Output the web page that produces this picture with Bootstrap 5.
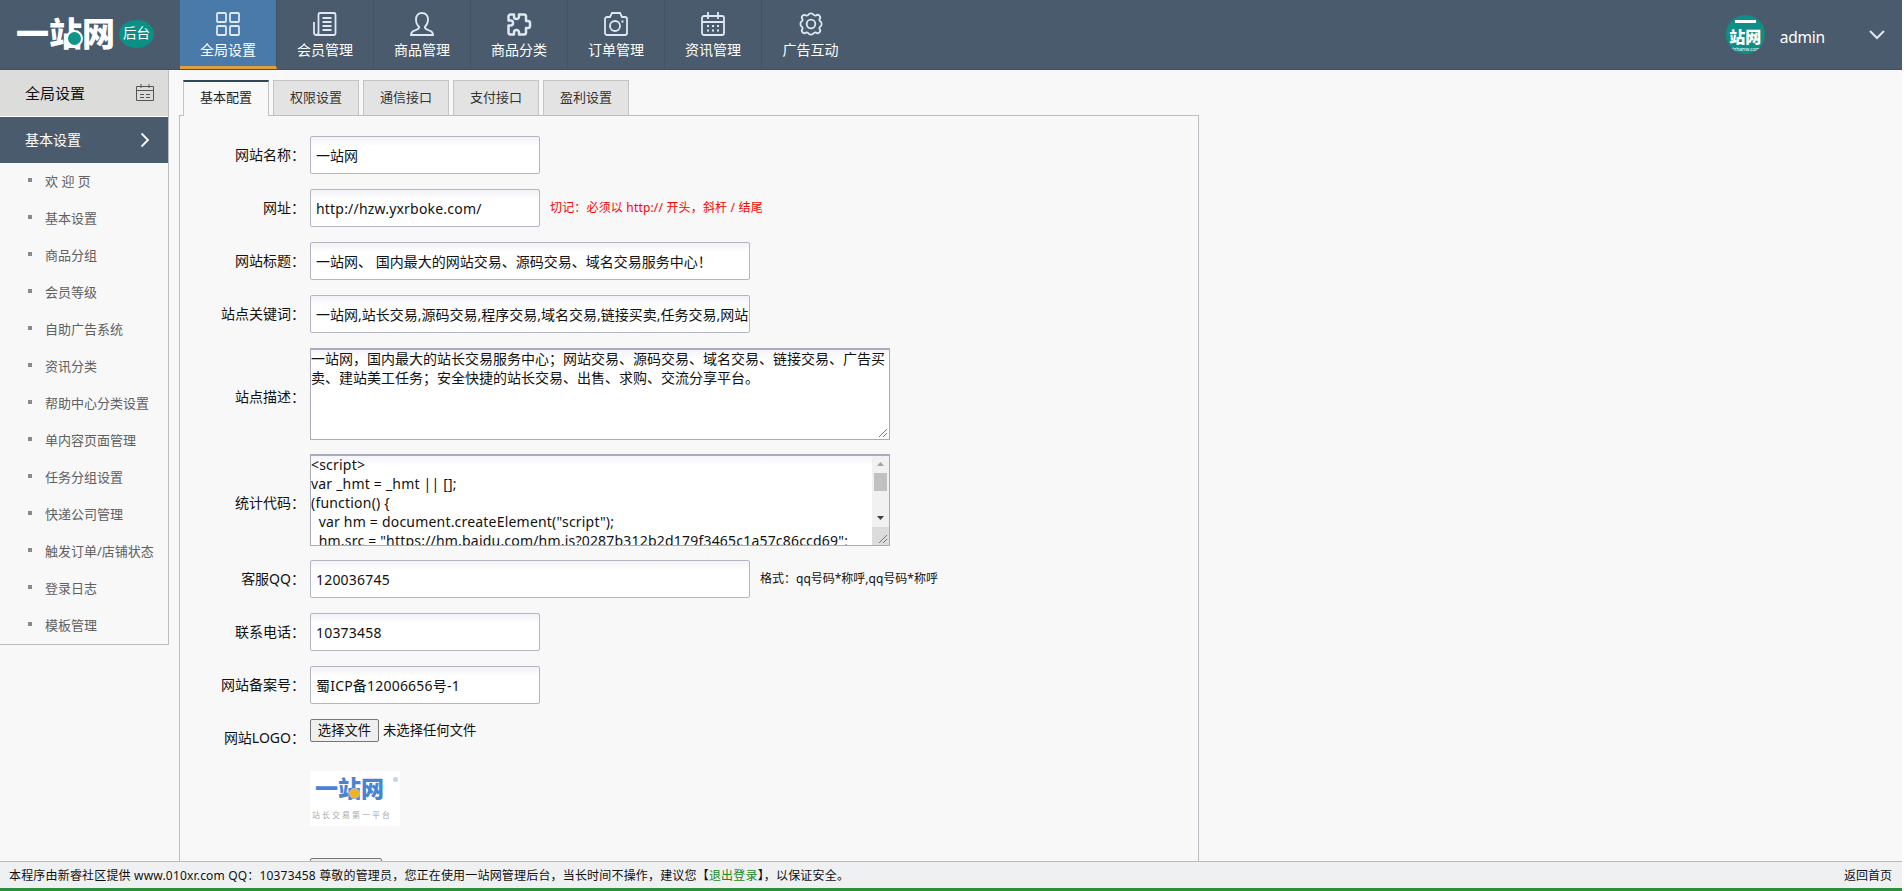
<!DOCTYPE html>
<html lang="zh-CN">
<head>
<meta charset="utf-8">
<title>一站网后台</title>
<link href="https://cdn.jsdelivr.net/npm/bootstrap@5.3.0/dist/css/bootstrap.min.css" rel="stylesheet">
<style>
body{font-family:"Noto Sans","Noto Sans CJK SC",sans-serif;font-size:14px;line-height:20px;color:#111;background:#f8f8f8;height:891px;overflow:hidden}
a{color:inherit;text-decoration:none}
svg{display:block}
.shell{height:891px;border-right:2px solid #fff}
.topbar{height:70px;background:#4a5b6d;border-bottom:1px solid #3f5062;color:#fff}
.brand{width:180px;padding-left:16px}
.heavy{font-family:"Noto Sans CJK SC",sans-serif;font-weight:900;line-height:1}
.brand .heavy{font-size:33px;width:101px;white-space:nowrap;position:relative;top:-2px}
.dot{position:absolute;left:50px;top:14px;width:17px;height:17px;border-radius:50%;background:#0e9488;border:2px solid #fff}
.pill{width:35px;height:28px;border-radius:50%;background:#0c8f84;font-size:13.500px;line-height:26px;text-align:center;margin:-1px 0 0 2px}
.topnav a{width:97px;height:69px;padding-top:11px;border-right:1px solid #435366;display:flex;flex-direction:column;align-items:center;line-height:20px}
.topnav a span{margin-top:3px}
.topnav a:last-child{border-right:0}
.topnav a.active{width:97px;background:#4a7aaa;border-bottom:3px solid #dfa03c}
.topnav svg,.ico{fill:none;stroke:#dde8f2;stroke-width:1.8}
.avatar{width:39px;height:39px;border-radius:50%;background:#0e8e86;overflow:hidden;text-align:center;margin-right:15px}
.avatar i{display:block;width:21px;height:3px;background:#fff;margin:5px auto 5px}
.avatar .heavy{font-size:16px;height:18px}
.avatar small{display:block;font-size:5px;line-height:7px}
.user-name{font-size:15.500px;letter-spacing:-.2px;margin-right:43px}
.side{width:169px;border-right:1px solid #bbbec2;height:575px;border-bottom:1px solid #bbbec2}
.side-head{height:47px;background:#dcdcda;border-bottom:1px solid #fff;font-size:15px;padding:0 14px 0 25px}
.side-cur{height:46px;background:#4a5b6d;color:#fff;padding:0 18px 0 25px}
.side-list{margin-top:-1px}
.side-list a{height:37px;padding-left:28px;font-size:13px;color:#606060;white-space:nowrap}
.side-list a::before{content:"";width:4px;height:4px;background:#8a8a8a;margin:-2px 13px 0 0}
.main{margin-left:10px;width:1020px}
.tabs{height:45px;padding:10px 0 0 4px;gap:4px}
.tabs a{width:86px;height:35px;border:1px solid #c4c4c4;border-bottom:0;background:#e3e3e3;font-size:13px;color:#333;text-align:center;line-height:33px}
.tabs a.active{background:#f8f8f8;border-top:2px solid #2f4756;height:36px;position:relative;line-height:31px;color:#222}
.panel{border:1px solid #bbbec2;height:760px;padding-top:20px;overflow:hidden}
.line{margin-bottom:15px;height:38px}
.line.tall{height:92px;margin-bottom:14px}
.lab{width:125px;text-align:right;margin-right:5px;white-space:nowrap}
.tall .lab{padding-top:5px}
.form-control.inp{width:230px;height:38px;border:1px solid #b3b5c0;border-radius:2px;padding:0 0 0 5px;font-size:14px;color:#111;background:linear-gradient(#f2f2f8,#fff 9px)}
.form-control.inp.wide{width:440px}
.form-control.inp.latin{letter-spacing:.2px}
.area{width:580px;height:92px;border:1px solid #a9abb8;border-top-width:2px;background:linear-gradient(#f4f4fb,#fff 9px);line-height:19px;white-space:pre;overflow:hidden;position:relative}
.area span{display:block;margin-top:-1px}
.area .code{letter-spacing:.2px}
.grip{position:absolute;right:1px;bottom:1px;stroke:#777;fill:none}
.scroller{position:absolute;right:0;top:0;width:17px;height:71px;background:#f1f1f1}
.thumb{width:13px;height:18px;background:#c1c1c1;margin:1px 2px 34px}
.corner{position:absolute;right:0;bottom:0;width:17px;height:18px;background:#dcdcdc}
.hint{font-size:12px;margin-left:10px;white-space:nowrap}
.filebtn{width:69px;height:23px;border:1px solid #767676;border-radius:2px;background:#efefef;font-size:13.33px;line-height:20px;text-align:center;margin-right:4px}
.logo-img{width:90px;height:55px;background:#fff;margin:14px 0 32px 130px;padding:5px 0 0 5px;position:relative;color:#4b83d3}
.logo-img .heavy{font-size:23px;white-space:nowrap}
.logo-img b{position:absolute;left:39px;top:17px;width:11px;height:11px;border-radius:50%;background:#f3b21b;border:1px solid #b8c4d8}
.logo-img em{position:absolute;right:2px;top:6px;width:5px;height:5px;border-radius:50%;background:#b9d8f2}
.logo-img p{font-size:8px;letter-spacing:2px;color:#aaa;line-height:10px;margin:11px 0 0 -3px;white-space:nowrap}
.foot{height:30px;border-top:1px solid #bbb;border-bottom:3px solid #2b9039;background:#eff0f1;font-size:12px;line-height:28px;padding:0 10px 0 9px;position:relative}
.foot a{color:#1c8a1c}
.foot .num{letter-spacing:.18px}
</style>
</head>
<body>
<div class="shell d-flex flex-column">
<header class="topbar d-flex flex-shrink-0">
  <div class="brand d-flex align-items-center"><div class="heavy">一站网<span class="dot"></span></div><div class="pill">后台</div></div>
  <nav class="topnav d-flex flex-grow-1">
    <a href="#" class="active"><svg width="26" height="26" viewBox="0 0 26 26"><rect x="2" y="2" width="9" height="9" rx="1"/><rect x="15" y="2" width="9" height="9" rx="1"/><rect x="2" y="15" width="9" height="9" rx="1"/><rect x="15" y="15" width="9" height="9" rx="1"/></svg><span>全局设置</span></a>
    <a href="#"><svg width="26" height="26" viewBox="0 0 26 26"><path d="M8 2h14a1.500 1.500 0 0 1 1.500 1.500v19A1.500 1.500 0 0 1 22 24H4.500A2.500 2.500 0 0 1 2 21.500V11M6.500 21.500v-18A1.500 1.500 0 0 1 8 2M6.500 21.500A2.300 2.300 0 0 1 4.500 24M10.500 7h9M10.500 11h9M10.500 15h9M10.500 19h9"/></svg><span>会员管理</span></a>
    <a href="#"><svg width="26" height="26" viewBox="0 0 26 26"><path d="M13 2c-4 0-6 3-6 6.500 0 3 1.500 6 3.200 7.500 0 2-1.500 2.500-4 3.300C3.500 20 2 21 2 24h22c0-3-1.500-4-4.200-4.700-2.500-.8-4-1.300-4-3.300C17.500 14.500 19 11.500 19 8.500 19 5 17 2 13 2z"/></svg><span>商品管理</span></a>
    <a href="#"><svg width="26" height="26" viewBox="0 0 26 26"><path stroke-width="2.500" stroke-linejoin="round" d="M8 3.500H4.500A2 2 0 0 0 2.500 5.500v4h2a2.300 2.300 0 0 1 0 5h-2v7a2 2 0 0 0 2 2H8v-2a2.300 2.300 0 0 1 5 0v2h5a2 2 0 0 0 2-2v-4.500h2a2 2 0 0 0 2-2v-3a2 2 0 0 0-2-2h-2V5.500a2 2 0 0 0-2-2h-5v2a2.300 2.300 0 0 1-5 0z"/></svg><span>商品分类</span></a>
    <a href="#"><svg width="26" height="26" viewBox="0 0 26 26"><path d="M4 6h3l2-4h8l2 4h3a2 2 0 0 1 2 2v14a2 2 0 0 1-2 2H4a2 2 0 0 1-2-2V8a2 2 0 0 1 2-2zM18.500 10.500h2"/><circle cx="12" cy="15" r="5"/></svg><span>订单管理</span></a>
    <a href="#"><svg width="26" height="26" viewBox="0 0 26 26"><path d="M4 5h18a2 2 0 0 1 2 2v15a2 2 0 0 1-2 2H4a2 2 0 0 1-2-2V7a2 2 0 0 1 2-2zM2 11h22M8 1v7M18 1v7"/><path stroke-dasharray="2 3" d="M7 15h13M7 19.500h13"/></svg><span>资讯管理</span></a>
    <a href="#"><svg width="26" height="26" viewBox="0 0 26 26"><circle cx="13" cy="13" r="4.300"/><path stroke-linejoin="round" d="M10.300 3.800a2.900 2.200 0 0 1 5.400 0 2.900 2.900 0 0 0 2.100.8 2.500 2.500 0 0 1 3.600 3.600 2.900 2.900 0 0 0 .8 2.100 2.200 2.900 0 0 1 0 5.400 2.900 2.900 0 0 0-.8 2.100 2.500 2.500 0 0 1-3.600 3.600 2.900 2.900 0 0 0-2.100.8 2.900 2.200 0 0 1-5.400 0 2.900 2.900 0 0 0-2.100-.8 2.500 2.500 0 0 1-3.600-3.600 2.900 2.900 0 0 0-.8-2.100 2.200 2.900 0 0 1 0-5.400 2.900 2.900 0 0 0 .8-2.100 2.500 2.500 0 0 1 3.600-3.600 2.900 2.900 0 0 0 2.100-.8z"/></svg><span>广告互动</span></a>
  </nav>
  <div class="d-flex align-items-center pe-3">
    <div class="avatar"><i></i><div class="heavy">站网</div><small>yizhanw.com</small></div>
    <span class="user-name pt-1">admin</span>
    <svg class="ico" width="18" height="12" viewBox="0 0 18 12"><path stroke-width="2" d="M2 2l7 7 7-7"/></svg>
  </div>
</header>
<div class="d-flex flex-grow-1 overflow-hidden align-items-start">
  <aside class="side flex-shrink-0">
    <div class="side-head d-flex align-items-center justify-content-between">全局设置
      <svg width="18" height="18" viewBox="0 0 18 18" fill="none" stroke="#555"><path d="M.5 2.500h17v14H.5zM.5 6.500h17M5 0v4M13 0v4M4 10.500h4m2 0h4M4 13.500h4m2 0h4"/></svg></div>
    <div class="side-cur d-flex align-items-center justify-content-between">基本设置
      <svg width="10" height="16" viewBox="0 0 10 16" fill="none" stroke="#fff" stroke-width="1.800"><path d="M1.500 1.500 8 8l-6.500 6.500"/></svg></div>
    <nav class="side-list">
      <a class="d-flex align-items-center" href="#">欢 迎 页</a><a class="d-flex align-items-center" href="#">基本设置</a><a class="d-flex align-items-center" href="#">商品分组</a><a class="d-flex align-items-center" href="#">会员等级</a><a class="d-flex align-items-center" href="#">自助广告系统</a><a class="d-flex align-items-center" href="#">资讯分类</a><a class="d-flex align-items-center" href="#">帮助中心分类设置</a><a class="d-flex align-items-center" href="#">单内容页面管理</a><a class="d-flex align-items-center" href="#">任务分组设置</a><a class="d-flex align-items-center" href="#">快递公司管理</a><a class="d-flex align-items-center" href="#">触发订单/店铺状态</a><a class="d-flex align-items-center" href="#">登录日志</a><a class="d-flex align-items-center" href="#">模板管理</a>
    </nav>
  </aside>
  <main class="main">
    <nav class="tabs d-flex"><a class="active" href="#">基本配置</a><a href="#">权限设置</a><a href="#">通信接口</a><a href="#">支付接口</a><a href="#">盈利设置</a></nav>
    <form class="panel">
      <div class="line d-flex align-items-center"><label class="lab">网站名称：</label><input class="form-control inp" value="一站网"></div>
      <div class="line d-flex align-items-center"><label class="lab">网址：</label><input class="form-control inp latin" value="http://hzw.yxrboke.com/"><span class="hint" style="color:#f00;letter-spacing:.17px">切记：必须以 http:// 开头，斜杆 / 结尾</span></div>
      <div class="line d-flex align-items-center"><label class="lab">网站标题：</label><input class="form-control inp wide" value="一站网、 国内最大的网站交易、源码交易、域名交易服务中心！"></div>
      <div class="line d-flex align-items-center"><label class="lab">站点关键词：</label><input class="form-control inp wide" value="一站网,站长交易,源码交易,程序交易,域名交易,链接买卖,任务交易,网站交易"></div>
      <div class="line tall d-flex align-items-center"><label class="lab">站点描述：</label><div class="area"><span>一站网，国内最大的站长交易服务中心；网站交易、源码交易、域名交易、链接交易、广告买
卖、建站美工任务；安全快捷的站长交易、出售、求购、交流分享平台。</span><svg class="grip" width="10" height="10"><path d="M1 9l8-8M5 9l4-4"/></svg></div></div>
      <div class="line tall d-flex align-items-center"><label class="lab">统计代码：</label><div class="area"><span class="code">&lt;script&gt;
var _hmt = _hmt || [];
(function() {
  var hm = document.createElement("script");
  hm.src = "https://hm.baidu.com/hm.js?0287b312b2d179f3465c1a57c86ccd69";</span><div class="scroller"><svg width="17" height="16"><path d="M5 10h7l-3.500-4z" fill="#a3a3a3"/></svg><div class="thumb"></div></div><svg style="position:absolute;right:0;bottom:18px" width="17" height="17"><path d="M5 6h7l-3.500 4z" fill="#404040"/></svg><div class="corner"></div><svg class="grip" width="10" height="10"><path d="M1 9l8-8M5 9l4-4"/></svg></div></div>
      <div class="line d-flex align-items-center"><label class="lab">客服QQ：</label><input class="form-control inp wide latin" value="120036745"><span class="hint">格式：qq号码*称呼,qq号码*称呼</span></div>
      <div class="line d-flex align-items-center"><label class="lab">联系电话：</label><input class="form-control inp latin" value="10373458"></div>
      <div class="line d-flex align-items-center"><label class="lab">网站备案号：</label><input class="form-control inp latin" value="蜀ICP备12006656号-1"></div>
      <div class="line mb-0 d-flex"><label class="lab align-self-center">网站LOGO：</label><div class="filebtn">选择文件</div><span style="font-size:13.33px;padding-top:1px">未选择任何文件</span></div>
      <div class="logo-img"><div class="heavy">一站网</div><b></b><em></em><p>站长交易第一平台</p></div>
      <div class="d-flex"><span class="lab"></span><div class="filebtn" style="width:72px"></div></div>
    </form>
  </main>
</div>
<footer class="foot flex-shrink-0 d-flex justify-content-between"><span class="num">本程序由新睿社区提供 www.010xr.com QQ：10373458 尊敬的管理员，您正在使用一站网管理后台，当长时间不操作，建议您【<a href="#">退出登录</a>】，以保证安全。</span><span>返回首页</span></footer>
</div>
<script src="https://cdn.jsdelivr.net/npm/bootstrap@5.3.0/dist/js/bootstrap.bundle.min.js"></script>
</body>
</html>
